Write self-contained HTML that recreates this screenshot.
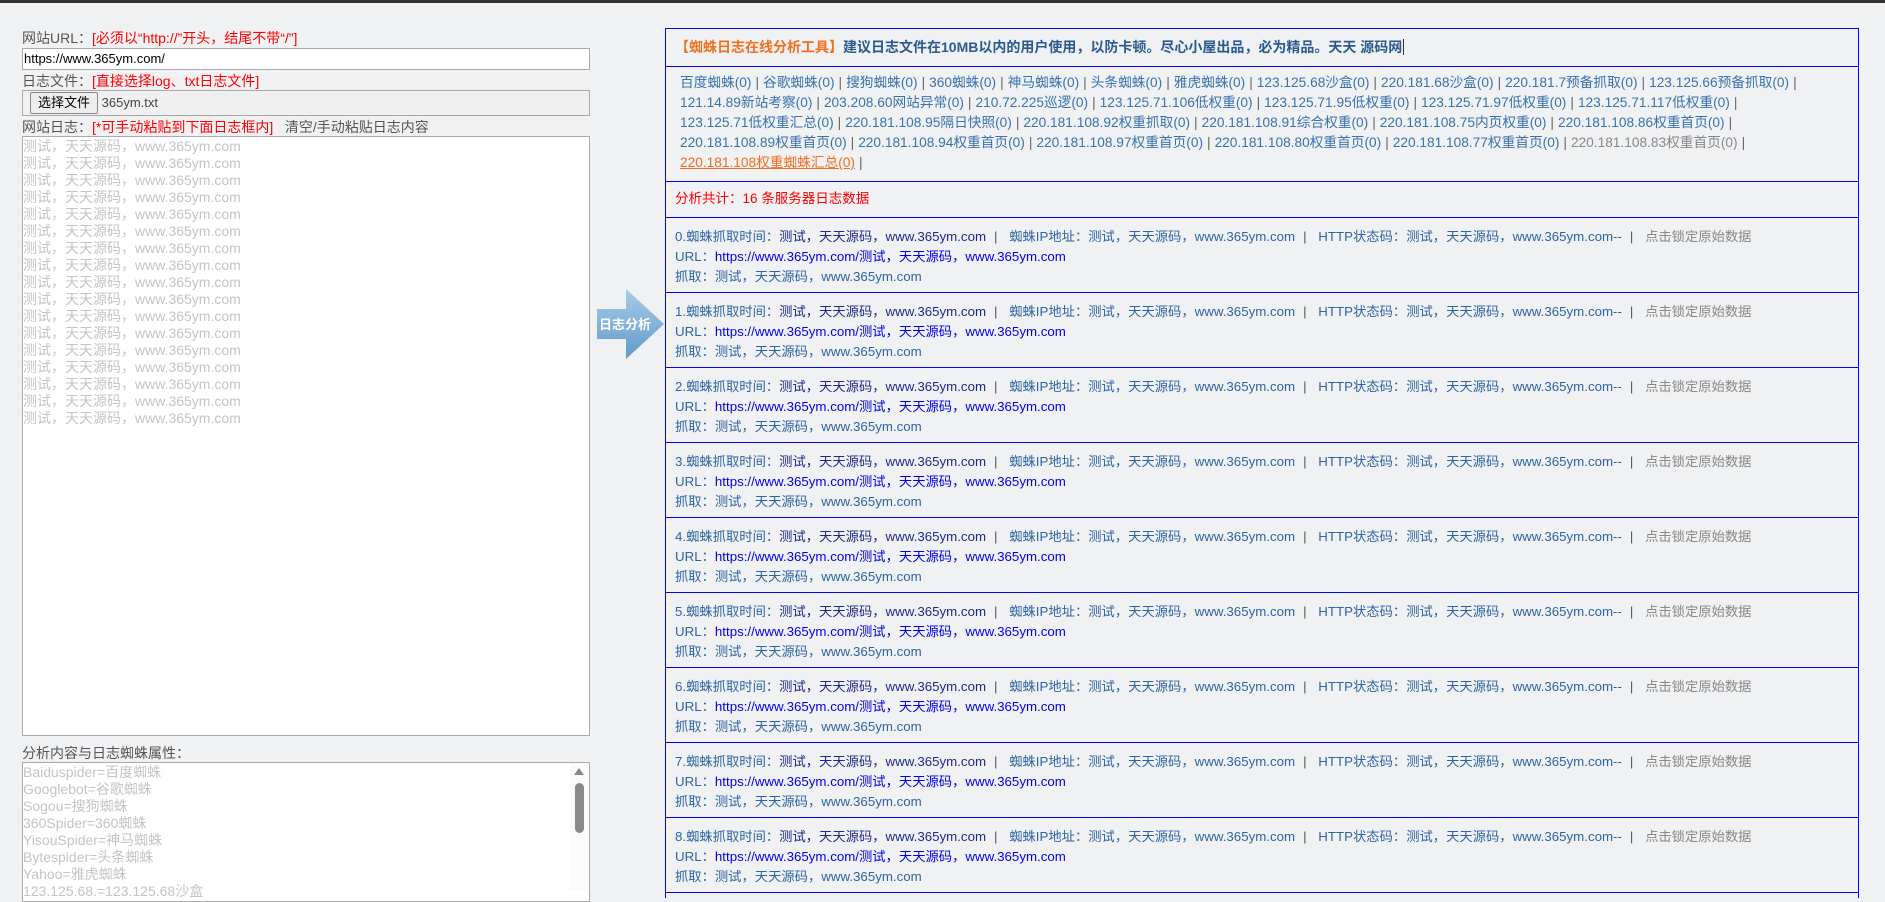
<!DOCTYPE html>
<html><head><meta charset="utf-8"><style>
*{box-sizing:border-box;margin:0;padding:0}
body{width:1885px;height:890px;overflow:hidden;background:#f0f1f3;font-family:"Liberation Sans","Noto Sans CJK SC",sans-serif;font-size:13.5px;position:relative}
.top{position:absolute;left:0;top:0;width:1885px;height:3px;background:#333}
.lbl{position:absolute;left:22px;color:#555;font-size:14px;white-space:nowrap}
.red{color:#f00}
.box{position:absolute;left:22px;width:568px;background:#fff;border:1px solid #aaa}
.ta{color:#c4c4c4;font-size:14px;line-height:17px;padding:1px 0;white-space:pre}
.panel{position:absolute;left:665px;top:28px;width:1194px;border:1px solid #00f;border-bottom:none;height:870px;overflow:hidden}
.row{border-bottom:1px solid #00f;padding-left:9px}
.lk{color:#3a72ad;line-height:20px;white-space:nowrap;padding:6px 0 6px 6px;font-size:13.7px}
.lk i{font-style:normal;color:#666;margin:0 4px}
.ent{height:75px;padding-top:9px;line-height:20px;white-space:nowrap;color:#2f64a3;font-size:13.3px}
.v{color:#1d2a8a}.u{color:#0000e6}.g{color:#888}
.sep{margin:0 8px;color:#555}
</style></head><body>
<div class="top"></div>
<div class="lbl" style="top:28px">网站URL：<span class="red">[必须以“http://”开头，结尾不带“/”]</span></div>
<div class="box" style="top:48px;height:22px;padding:2px 1px;font-size:13px;color:#000">https://www.365ym.com/</div>
<div class="lbl" style="top:71px">日志文件：<span class="red">[直接选择log、txt日志文件]</span></div>
<div class="box" style="top:90px;height:26px;background:#f0f0f0;font-size:13px;color:#444;padding:1px 0 0 7px"><span style="display:inline-block;border:1px solid #888;border-radius:2px;background:#eee;padding:1px 7px;height:22px;line-height:18px;color:#000">选择文件</span> 365ym.txt</div>
<div class="lbl" style="top:117px">网站日志：<span class="red">[*可手动粘贴到下面日志框内]</span>&nbsp;&nbsp;&nbsp;清空/手动粘贴日志内容</div>
<div class="box ta" style="top:136px;height:600px">测试，天天源码，www.365ym.com
测试，天天源码，www.365ym.com
测试，天天源码，www.365ym.com
测试，天天源码，www.365ym.com
测试，天天源码，www.365ym.com
测试，天天源码，www.365ym.com
测试，天天源码，www.365ym.com
测试，天天源码，www.365ym.com
测试，天天源码，www.365ym.com
测试，天天源码，www.365ym.com
测试，天天源码，www.365ym.com
测试，天天源码，www.365ym.com
测试，天天源码，www.365ym.com
测试，天天源码，www.365ym.com
测试，天天源码，www.365ym.com
测试，天天源码，www.365ym.com
测试，天天源码，www.365ym.com</div>
<div class="lbl" style="top:743px">分析内容与日志蜘蛛属性：</div>
<div class="box ta" style="top:762px;height:140px">Baiduspider=百度蜘蛛
Googlebot=谷歌蜘蛛
Sogou=搜狗蜘蛛
360Spider=360蜘蛛
YisouSpider=神马蜘蛛
Bytespider=头条蜘蛛
Yahoo=雅虎蜘蛛
123.125.68.=123.125.68沙盒</div>
<div style="position:absolute;left:570px;top:763px;width:19px;height:127px;background:#fafafa"></div>
<div style="position:absolute;left:575px;top:783px;width:9px;height:50px;border-radius:5px;background:#8a8a8a"></div>
<div style="position:absolute;left:574px;top:768px;width:0;height:0;border-left:5px solid transparent;border-right:5px solid transparent;border-bottom:7px solid #888"></div>
<svg style="position:absolute;left:596px;top:288px" width="70" height="72"><defs><linearGradient id="a" x1="0" y1="0" x2="0" y2="1"><stop offset="0" stop-color="#a9cbe6"/><stop offset="1" stop-color="#5f9bcb"/></linearGradient></defs><path d="M1 21 H30 V1 L68 36 L30 71 V51 H1 Z" fill="url(#a)"/><text x="3" y="41" fill="#fff" font-size="13" font-weight="bold" font-family="Noto Sans CJK SC,sans-serif">日志分析</text></svg>
<div class="panel">
<div class="row" style="height:38px;line-height:36px;font-weight:bold;font-size:14px;color:#2a5a8f"><span style="color:#f07020">【蜘蛛日志在线分析工具】</span>建议日志文件在10MB以内的用户使用，以防卡顿。尽心小屋出品，必为精品。天天 源码网<span style="border-left:1px solid #333;margin-left:1px"></span></div>
<div class="row lk" style="height:115px;padding-left:14px">百度蜘蛛(0)<i>|</i>谷歌蜘蛛(0)<i>|</i>搜狗蜘蛛(0)<i>|</i>360蜘蛛(0)<i>|</i>神马蜘蛛(0)<i>|</i>头条蜘蛛(0)<i>|</i>雅虎蜘蛛(0)<i>|</i>123.125.68沙盒(0)<i>|</i>220.181.68沙盒(0)<i>|</i>220.181.7预备抓取(0)<i>|</i>123.125.66预备抓取(0)<i>|</i><br>121.14.89新站考察(0)<i>|</i>203.208.60网站异常(0)<i>|</i>210.72.225巡逻(0)<i>|</i>123.125.71.106低权重(0)<i>|</i>123.125.71.95低权重(0)<i>|</i>123.125.71.97低权重(0)<i>|</i>123.125.71.117低权重(0)<i>|</i><br>123.125.71低权重汇总(0)<i>|</i>220.181.108.95隔日快照(0)<i>|</i>220.181.108.92权重抓取(0)<i>|</i>220.181.108.91综合权重(0)<i>|</i>220.181.108.75内页权重(0)<i>|</i>220.181.108.86权重首页(0)<i>|</i><br>220.181.108.89权重首页(0)<i>|</i>220.181.108.94权重首页(0)<i>|</i>220.181.108.97权重首页(0)<i>|</i>220.181.108.80权重首页(0)<i>|</i>220.181.108.77权重首页(0)<i>|</i><span style="color:#888">220.181.108.83权重首页(0)</span><i>|</i><br><span style="color:#f07020;text-decoration:underline">220.181.108权重蜘蛛汇总(0)</span><i>|</i></div>
<div class="row" style="height:36px;line-height:34px;color:#f00">分析共计：16 条服务器日志数据</div>
<div class="row ent">0.蜘蛛抓取时间：<span class="v">测试，天天源码，www.365ym.com</span><span class="sep">|</span> 蜘蛛IP地址：测试，天天源码，www.365ym.com<span class="sep">|</span> HTTP状态码：测试，天天源码，www.365ym.com--<span class="sep">|</span> <span class="g">点击锁定原始数据</span><br>URL：<span class="u">https://www.365ym.com/测试，天天源码，www.365ym.com</span><br>抓取：测试，天天源码，www.365ym.com</div>
<div class="row ent">1.蜘蛛抓取时间：<span class="v">测试，天天源码，www.365ym.com</span><span class="sep">|</span> 蜘蛛IP地址：测试，天天源码，www.365ym.com<span class="sep">|</span> HTTP状态码：测试，天天源码，www.365ym.com--<span class="sep">|</span> <span class="g">点击锁定原始数据</span><br>URL：<span class="u">https://www.365ym.com/测试，天天源码，www.365ym.com</span><br>抓取：测试，天天源码，www.365ym.com</div>
<div class="row ent">2.蜘蛛抓取时间：<span class="v">测试，天天源码，www.365ym.com</span><span class="sep">|</span> 蜘蛛IP地址：测试，天天源码，www.365ym.com<span class="sep">|</span> HTTP状态码：测试，天天源码，www.365ym.com--<span class="sep">|</span> <span class="g">点击锁定原始数据</span><br>URL：<span class="u">https://www.365ym.com/测试，天天源码，www.365ym.com</span><br>抓取：测试，天天源码，www.365ym.com</div>
<div class="row ent">3.蜘蛛抓取时间：<span class="v">测试，天天源码，www.365ym.com</span><span class="sep">|</span> 蜘蛛IP地址：测试，天天源码，www.365ym.com<span class="sep">|</span> HTTP状态码：测试，天天源码，www.365ym.com--<span class="sep">|</span> <span class="g">点击锁定原始数据</span><br>URL：<span class="u">https://www.365ym.com/测试，天天源码，www.365ym.com</span><br>抓取：测试，天天源码，www.365ym.com</div>
<div class="row ent">4.蜘蛛抓取时间：<span class="v">测试，天天源码，www.365ym.com</span><span class="sep">|</span> 蜘蛛IP地址：测试，天天源码，www.365ym.com<span class="sep">|</span> HTTP状态码：测试，天天源码，www.365ym.com--<span class="sep">|</span> <span class="g">点击锁定原始数据</span><br>URL：<span class="u">https://www.365ym.com/测试，天天源码，www.365ym.com</span><br>抓取：测试，天天源码，www.365ym.com</div>
<div class="row ent">5.蜘蛛抓取时间：<span class="v">测试，天天源码，www.365ym.com</span><span class="sep">|</span> 蜘蛛IP地址：测试，天天源码，www.365ym.com<span class="sep">|</span> HTTP状态码：测试，天天源码，www.365ym.com--<span class="sep">|</span> <span class="g">点击锁定原始数据</span><br>URL：<span class="u">https://www.365ym.com/测试，天天源码，www.365ym.com</span><br>抓取：测试，天天源码，www.365ym.com</div>
<div class="row ent">6.蜘蛛抓取时间：<span class="v">测试，天天源码，www.365ym.com</span><span class="sep">|</span> 蜘蛛IP地址：测试，天天源码，www.365ym.com<span class="sep">|</span> HTTP状态码：测试，天天源码，www.365ym.com--<span class="sep">|</span> <span class="g">点击锁定原始数据</span><br>URL：<span class="u">https://www.365ym.com/测试，天天源码，www.365ym.com</span><br>抓取：测试，天天源码，www.365ym.com</div>
<div class="row ent">7.蜘蛛抓取时间：<span class="v">测试，天天源码，www.365ym.com</span><span class="sep">|</span> 蜘蛛IP地址：测试，天天源码，www.365ym.com<span class="sep">|</span> HTTP状态码：测试，天天源码，www.365ym.com--<span class="sep">|</span> <span class="g">点击锁定原始数据</span><br>URL：<span class="u">https://www.365ym.com/测试，天天源码，www.365ym.com</span><br>抓取：测试，天天源码，www.365ym.com</div>
<div class="row ent">8.蜘蛛抓取时间：<span class="v">测试，天天源码，www.365ym.com</span><span class="sep">|</span> 蜘蛛IP地址：测试，天天源码，www.365ym.com<span class="sep">|</span> HTTP状态码：测试，天天源码，www.365ym.com--<span class="sep">|</span> <span class="g">点击锁定原始数据</span><br>URL：<span class="u">https://www.365ym.com/测试，天天源码，www.365ym.com</span><br>抓取：测试，天天源码，www.365ym.com</div>
</div>
</body></html>
